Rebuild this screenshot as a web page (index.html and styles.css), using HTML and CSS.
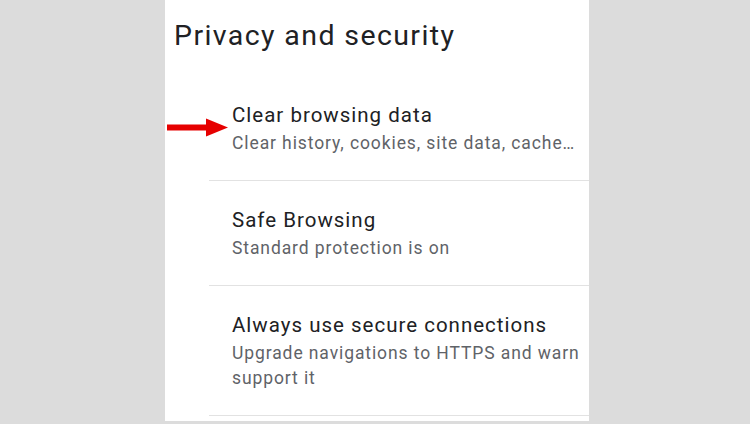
FILE: index.html
```html
<!DOCTYPE html>
<html lang="en">
<head>
  <meta charset="UTF-8">
  <title>Privacy and security</title>
  <link rel="stylesheet" href="styles.css">
</head>
<body>

  <div class="panel">
    <h1 class="heading">Privacy and security</h1>

    <div class="row">
      <div class="row-title">Clear browsing data</div>
      <div class="row-summary">Clear history, cookies, site data, cache…</div>
    </div>

    <div class="row">
      <div class="row-title">Safe Browsing</div>
      <div class="row-summary">Standard protection is on</div>
    </div>

    <div class="row">
      <div class="row-title">Always use secure connections</div>
      <div class="row-summary">Upgrade navigations to HTTPS and warn<br>support it</div>
    </div>

    <svg class="arrow" width="62" height="20" viewBox="0 0 62 20">
      <rect x="0" y="6.5" width="41" height="6" fill="#e60000"/>
      <polygon points="39,0.5 61,9.5 39,18.5" fill="#e60000"/>
    </svg>
  </div>

</body>
</html>
```

FILE: styles.css
```css
body {
  margin: 0;
  padding: 0;
  background: #dcdcdc;
  font-family: Roboto, 'Noto Sans', sans-serif;
}

.panel {
  position: relative;
  margin-left: 165px;
  width: 424px;
  height: 421px;
  background: #fff;
  overflow: hidden;
}

.heading {
  margin: 0 0 22px;
  padding: 18px 0 0 9px;
  font-size: 28.5px;
  line-height: 36px;
  font-weight: 400;
  letter-spacing: 1.4px;
  color: #202124;
}

.row {
  margin-left: 44px;
  padding: 23px 0 24px 23px;
  border-bottom: 1px solid #e2e2e2;
}

.row-title {
  font-size: 20.5px;
  line-height: 32px;
  letter-spacing: 1px;
  color: #202124;
  white-space: nowrap;
}

.row-summary {
  font-size: 17.5px;
  line-height: 25px;
  letter-spacing: 0.9px;
  color: #5f6368;
  white-space: nowrap;
}

.arrow {
  position: absolute;
  left: 2px;
  top: 118px;
}
```
